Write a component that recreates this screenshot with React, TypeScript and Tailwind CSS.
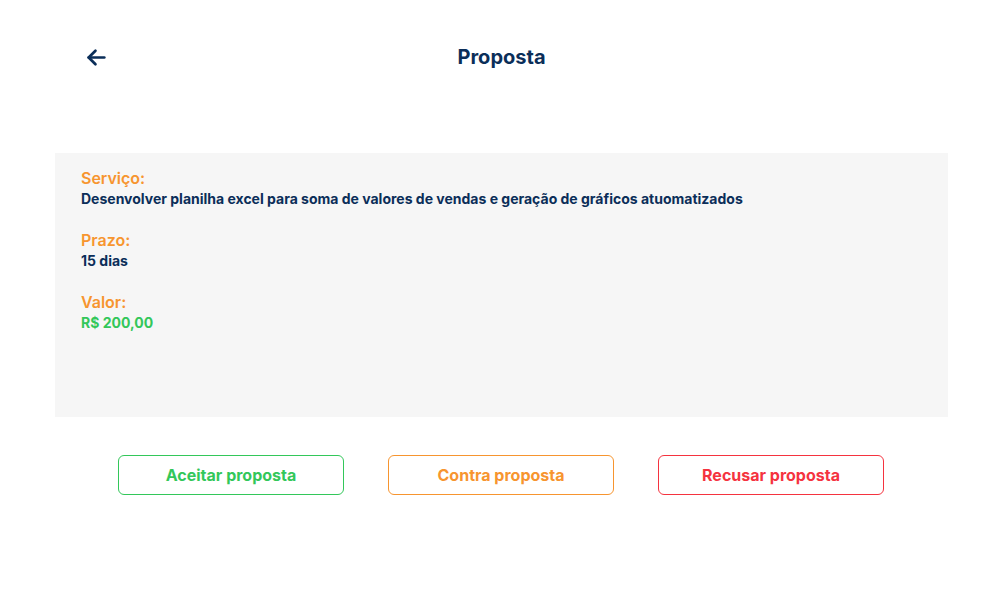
import React from "react";

export default function App() {
  return (
    <div className="w-[1003px] h-[605px] bg-white font-['Inter',sans-serif]">
      <div className="relative flex items-center justify-center h-[114px] pb-[0px]">
        <button className="absolute left-[84px] top-[45px] text-[#0b2e59]">
          <svg width="25" height="25" viewBox="0 0 24 24" fill="none" stroke="currentColor" strokeWidth="2.6" strokeLinecap="round" strokeLinejoin="round">
            <path d="M19.5 12H4.5" />
            <path d="M11 5.5 4.5 12l6.5 6.5" />
          </svg>
        </button>
        <h1 className="text-[20px] leading-[28px] font-bold text-[#0b2e59] -mt-[1px]">Proposta</h1>
      </div>
      <div className="mt-[39px] mx-[55px] h-[264px] bg-[#f6f6f6] pt-[15px] px-[26px]">
        <div className="flex flex-col">
          <div className="text-[16px] leading-[20px] font-semibold text-[#f7952f]">Serviço:</div>
          <div className="text-[14px] leading-[22px] font-bold text-[#0b2e59]">
            Desenvolver planilha excel para soma de valores de vendas e geração de gráficos atuomatizados
          </div>
          <div className="mt-[20px] text-[16px] leading-[20px] font-semibold text-[#f7952f]">Prazo:</div>
          <div className="text-[14px] leading-[22px] font-bold text-[#0b2e59]">15 dias</div>
          <div className="mt-[20px] text-[16px] leading-[20px] font-semibold text-[#f7952f]">Valor:</div>
          <div className="text-[14px] leading-[22px] font-bold text-[#33c75a]">R$ 200,00</div>
        </div>
      </div>
      <div className="mt-[38px] flex gap-[44px] pl-[118px]">
        <button className="w-[226px] h-[40px] rounded-[6px] border border-[#33c75a] text-[#33c75a] text-[16px] font-bold">
          Aceitar proposta
        </button>
        <button className="w-[226px] h-[40px] rounded-[6px] border border-[#f7952f] text-[#f7952f] text-[16px] font-bold">
          Contra proposta
        </button>
        <button className="w-[226px] h-[40px] rounded-[6px] border border-[#f5333f] text-[#f5333f] text-[16px] font-bold">
          Recusar proposta
        </button>
      </div>
    </div>
  );
}
